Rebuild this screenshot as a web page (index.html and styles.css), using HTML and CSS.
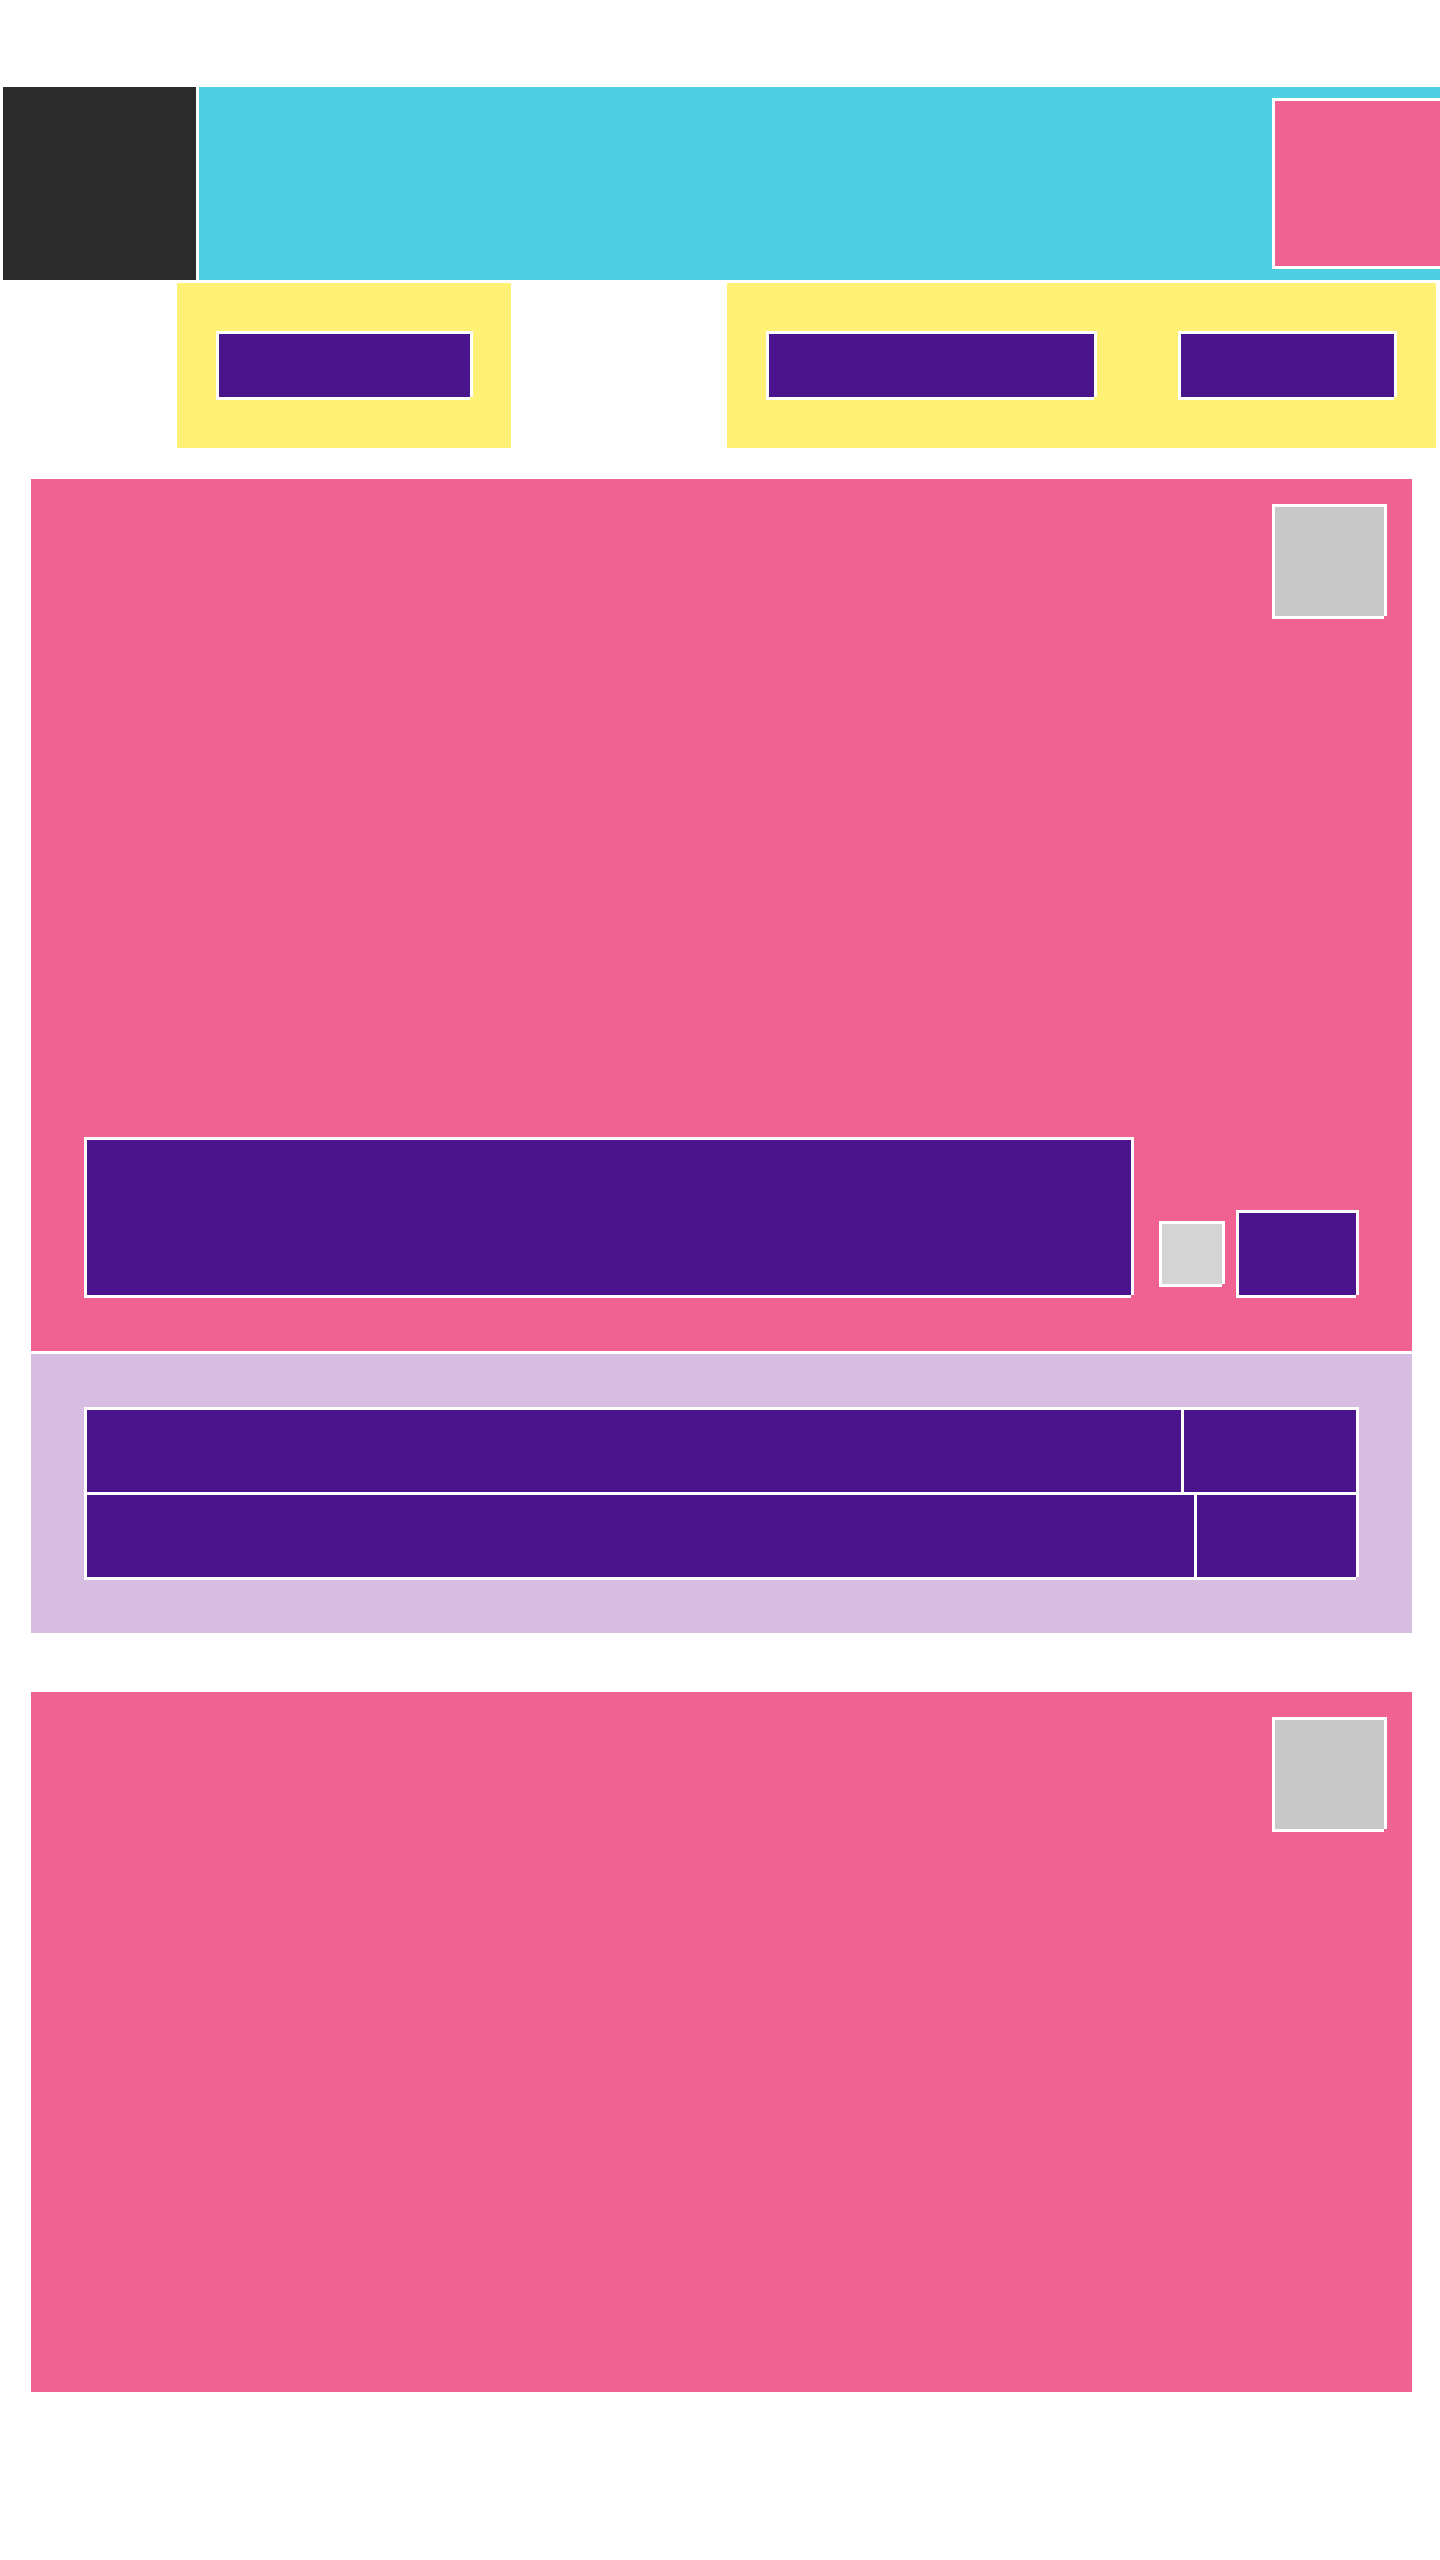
FILE: index.html
```html
<!DOCTYPE html>
<html lang="en">
<head>
<meta charset="utf-8">
<title>Layout</title>
<link rel="stylesheet" href="styles.css">
</head>
<body>
<div class="page">
  <header class="top">
    <div class="logo"></div>
    <div class="bar">
      <div class="avatar framed"></div>
    </div>
  </header>

  <nav class="tabs">
    <div class="tab-group tab-group-left">
      <div class="pill pill-a framed"></div>
    </div>
    <div class="tab-group tab-group-right">
      <div class="pill pill-b framed"></div>
      <div class="pill pill-c framed"></div>
    </div>
  </nav>

  <section class="card card-main">
    <div class="thumb-row">
      <div class="thumb framed"></div>
    </div>
    <div class="action-row">
      <div class="caption framed"></div>
      <div class="controls">
        <div class="toggle framed"></div>
        <div class="button framed"></div>
      </div>
    </div>
  </section>

  <section class="details">
    <div class="table">
      <div class="row">
        <div class="cell cell-1a"></div>
        <div class="cell cell-1b"></div>
      </div>
      <div class="row">
        <div class="cell cell-2a"></div>
        <div class="cell cell-2b"></div>
      </div>
    </div>
  </section>

  <section class="card card-second">
    <div class="thumb-row">
      <div class="thumb framed"></div>
    </div>
  </section>
</div>
</body>
</html>
```

FILE: styles.css
```css
html, body {
  margin: 0;
  padding: 0;
  background: #ffffff;
  font-family: "Liberation Sans", Arial, sans-serif;
}

.page {
  width: 1440px;
  min-height: 2560px;
  overflow: hidden;
}

.framed {
  box-sizing: border-box;
  border-left: 3px solid #ffffff;
  border-top: 3px solid #ffffff;
  box-shadow: 3px 0 0 #ffffff, 0 3px 0 #ffffff;
}

/* Header */
.top {
  display: flex;
  gap: 3px;
  margin-top: 87px;
  padding-left: 3px;
  height: 193px;
}

.logo {
  width: 193px;
  height: 193px;
  background: #2b2b2b;
  flex-shrink: 0;
}

.bar {
  flex: 1;
  display: flex;
  justify-content: flex-end;
  align-items: flex-start;
  padding-top: 11px;
  box-sizing: border-box;
  background: #4dd0e1;
}

.avatar {
  width: 168px;
  height: 168px;
  background: #f06292;
  flex-shrink: 0;
}

/* Tabs */
.tabs {
  display: flex;
  margin-top: 3px;
  padding-left: 177px;
  height: 165px;
}

.tab-group {
  box-sizing: border-box;
  height: 165px;
  background: #fff176;
  padding-top: 48px;
}

.tab-group-left {
  width: 334px;
  padding-left: 39px;
}

.tab-group-right {
  width: 709px;
  margin-left: 216px;
  padding-left: 39px;
  padding-right: 42px;
  display: flex;
  justify-content: space-between;
  align-items: flex-start;
}

.pill {
  height: 66px;
  background: #4a148c;
}

.pill-a { width: 254px; }
.pill-b { width: 328px; }
.pill-c { width: 216px; }

/* Cards */
.card {
  box-sizing: border-box;
  width: 1381px;
  margin-left: 31px;
  background: #f06292;
  display: flex;
  flex-direction: column;
  justify-content: space-between;
}

.card-main {
  margin-top: 31px;
  height: 872px;
}

.card-second {
  margin-top: 59px;
  height: 700px;
}

.thumb-row {
  display: flex;
  justify-content: flex-end;
  padding: 25px 28px 0 0;
}

.thumb {
  width: 112px;
  height: 112px;
  background: #c8c8c8;
}

.action-row {
  display: flex;
  align-items: flex-end;
  padding: 0 56px 56px 53px;
}

.caption {
  width: 1047px;
  height: 158px;
  background: #4a148c;
  flex-shrink: 0;
}

.controls {
  display: flex;
  align-items: center;
  gap: 14px;
  margin-left: 28px;
}

.toggle {
  width: 63px;
  height: 63px;
  background: #d4d4d4;
}

.button {
  width: 120px;
  height: 85px;
  background: #4a148c;
}

/* Details table */
.details {
  box-sizing: border-box;
  width: 1381px;
  height: 279px;
  margin: 3px 0 0 31px;
  padding: 53px 56px 56px 53px;
  background: #d7bde2;
}

.table {
  width: 1272px;
  box-shadow: 3px 0 0 #ffffff, 0 3px 0 #ffffff;
}

.row {
  display: flex;
  height: 85px;
}

.cell {
  box-sizing: border-box;
  height: 85px;
  background: #4a148c;
  border-left: 3px solid #ffffff;
  border-top: 3px solid #ffffff;
}

.cell-1a { width: 1097px; }
.cell-1b { width: 175px; }
.cell-2a { width: 1110px; }
.cell-2b { width: 162px; }
```
